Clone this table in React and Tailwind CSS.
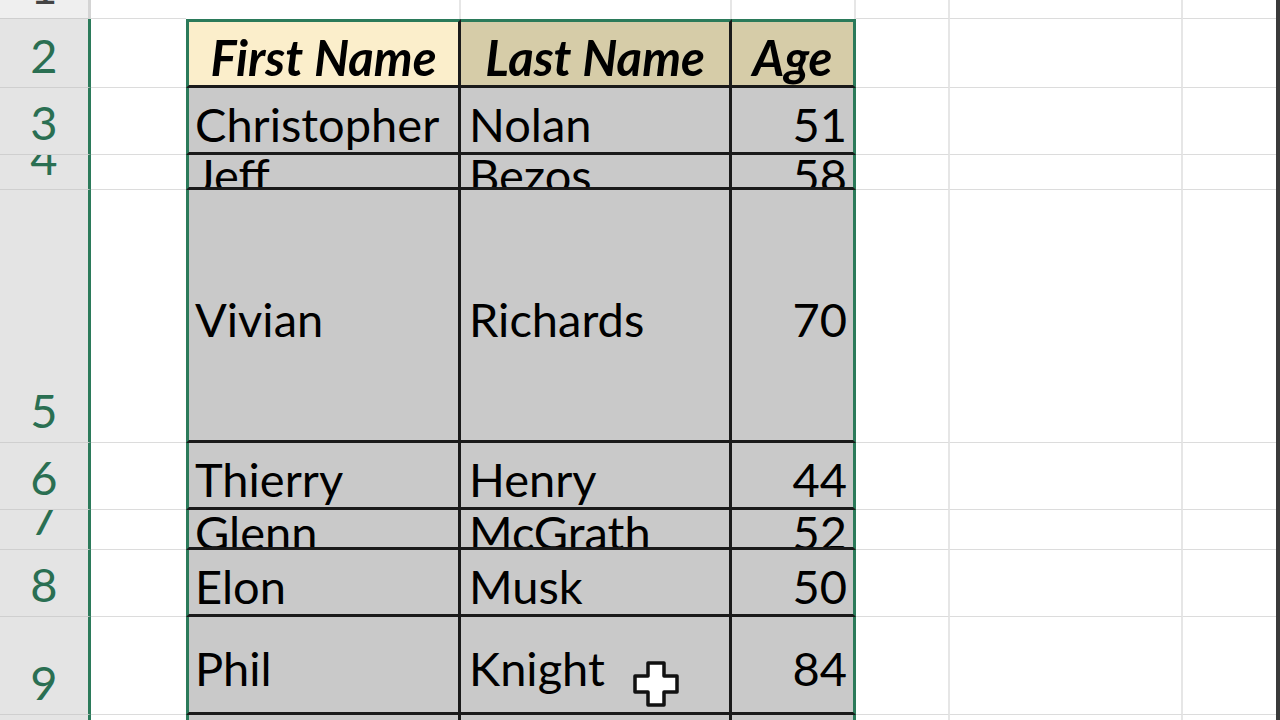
import React from 'react';

const rows = [
  { n: 1, h: 'h-[19px]', kind: 'blank' },
  { n: 2, h: 'h-[69px]', kind: 'head', cells: ['First Name', 'Last Name', 'Age'] },
  { n: 3, h: 'h-[67px]', kind: 'data', cells: ['Christopher', 'Nolan', '51'] },
  { n: 4, h: 'h-[35px]', kind: 'data', cells: ['Jeff', 'Bezos', '58'] },
  { n: 5, h: 'h-[253px]', kind: 'data', cells: ['Vivian', 'Richards', '70'] },
  { n: 6, h: 'h-[67px]', kind: 'data', cells: ['Thierry', 'Henry', '44'] },
  { n: 7, h: 'h-[40px]', kind: 'data', cells: ['Glenn', 'McGrath', '52'] },
  { n: 8, h: 'h-[67px]', kind: 'data', cells: ['Elon', 'Musk', '50'] },
  { n: 9, h: 'h-[98px]', kind: 'data', cells: ['Phil', 'Knight', '84'] },
  { n: 10, h: 'h-[67px]', kind: 'data', cells: ['', '', ''] },
];

function RowHeader({ n }) {
  const selected = n > 1;
  return (
    <div
      className={`w-[91px] shrink-0 flex items-end justify-center pb-2 overflow-hidden border-b border-b-[#cfcfcf] border-r-[3px] ${
        selected ? 'bg-[#e4e4e4] text-[#2a6f52] border-r-[#2b7a5a]' : 'bg-[#efefef] text-[#444] border-r-[#d4d4d4]'
      }`}
    >
      <span className="leading-none">{n}</span>
    </div>
  );
}

function Blank({ w, last }) {
  return (
    <div
      className={`${w} shrink-0 bg-white border-b border-b-[#dcdcdc] ${last ? '' : 'border-r-2 border-r-[#e6e6e6]'}`}
    />
  );
}

function TableCells({ row }) {
  if (row.kind === 'blank') {
    return (
      <>
        <div className="w-[275px] shrink-0 bg-white border-r-2 border-r-[#e6e6e6]" />
        <div className="w-[271px] shrink-0 bg-white border-r-2 border-r-[#e6e6e6]" />
        <div className="w-[124px] shrink-0 bg-white border-r-2 border-r-[#e6e6e6]" />
      </>
    );
  }

  if (row.kind === 'head') {
    return (
      <>
        <div className="w-[275px] shrink-0 flex items-center justify-center pt-2 overflow-hidden bg-[#fbeecb] border-t-[3px] border-t-[#2b7a5a] border-l-[3px] border-l-[#2b7a5a] border-r-[3px] border-r-[#1a1a1a] border-b-[3px] border-b-[#1a1a1a]">
          <span className="leading-none font-bold italic text-[49px]">{row.cells[0]}</span>
        </div>
        <div className="w-[271px] shrink-0 flex items-center justify-center pt-2 overflow-hidden bg-[#d6cca8] border-t-[3px] border-t-[#2b7a5a] border-r-[3px] border-r-[#1a1a1a] border-b-[3px] border-b-[#1a1a1a]">
          <span className="leading-none font-bold italic text-[49px]">{row.cells[1]}</span>
        </div>
        <div className="w-[124px] shrink-0 flex items-center justify-center pt-2 overflow-hidden bg-[#d6cca8] border-t-[3px] border-t-[#2b7a5a] border-r-[3px] border-r-[#2b7a5a] border-b-[3px] border-b-[#1a1a1a]">
          <span className="leading-none font-bold italic text-[49px]">{row.cells[2]}</span>
        </div>
      </>
    );
  }

  return (
    <>
      <div className="w-[275px] shrink-0 flex items-center pl-[6px] pt-2 overflow-hidden bg-[#c9c9c9] border-l-[3px] border-l-[#2b7a5a] border-r-[3px] border-r-[#1a1a1a] border-b-[3px] border-b-[#1a1a1a]">
        <span className="leading-none whitespace-nowrap">{row.cells[0]}</span>
      </div>
      <div className="w-[271px] shrink-0 flex items-center pl-[8px] pt-2 overflow-hidden bg-[#c9c9c9] border-r-[3px] border-r-[#1a1a1a] border-b-[3px] border-b-[#1a1a1a]">
        <span className="leading-none whitespace-nowrap">{row.cells[1]}</span>
      </div>
      <div className="w-[124px] shrink-0 flex items-center justify-end pr-[6px] pt-2 overflow-hidden bg-[#c9c9c9] border-r-[3px] border-r-[#2b7a5a] border-b-[3px] border-b-[#1a1a1a]">
        <span className="leading-none whitespace-nowrap">{row.cells[2]}</span>
      </div>
    </>
  );
}

export default function App() {
  return (
    <div className="relative h-[720px] w-[1280px] overflow-hidden bg-white text-black text-[47px] font-['Lato',sans-serif]">
      {rows.map((row) => (
        <div key={row.n} className={`flex ${row.h}`}>
          <RowHeader n={row.n} />
          {/* column A */}
          <Blank w="w-[95px]" last />
          <TableCells row={row} />
          <Blank w="w-[94px]" />
          <Blank w="w-[233px]" />
          <Blank w="w-[93px]" last />
          <div className="w-[4px] shrink-0 bg-[#3a3a3a]" />
        </div>
      ))}

      {/* mouse cursor over the sheet */}
      <svg className="absolute left-[631px] top-[659px]" width="50" height="50" viewBox="0 0 50 50">
        <path
          d="M17 4 H33 V17 H46 V33 H33 V46 H17 V33 H4 V17 H17 Z"
          fill="#ffffff"
          stroke="#111111"
          strokeWidth="3.5"
          strokeLinejoin="round"
        />
      </svg>
    </div>
  );
}
